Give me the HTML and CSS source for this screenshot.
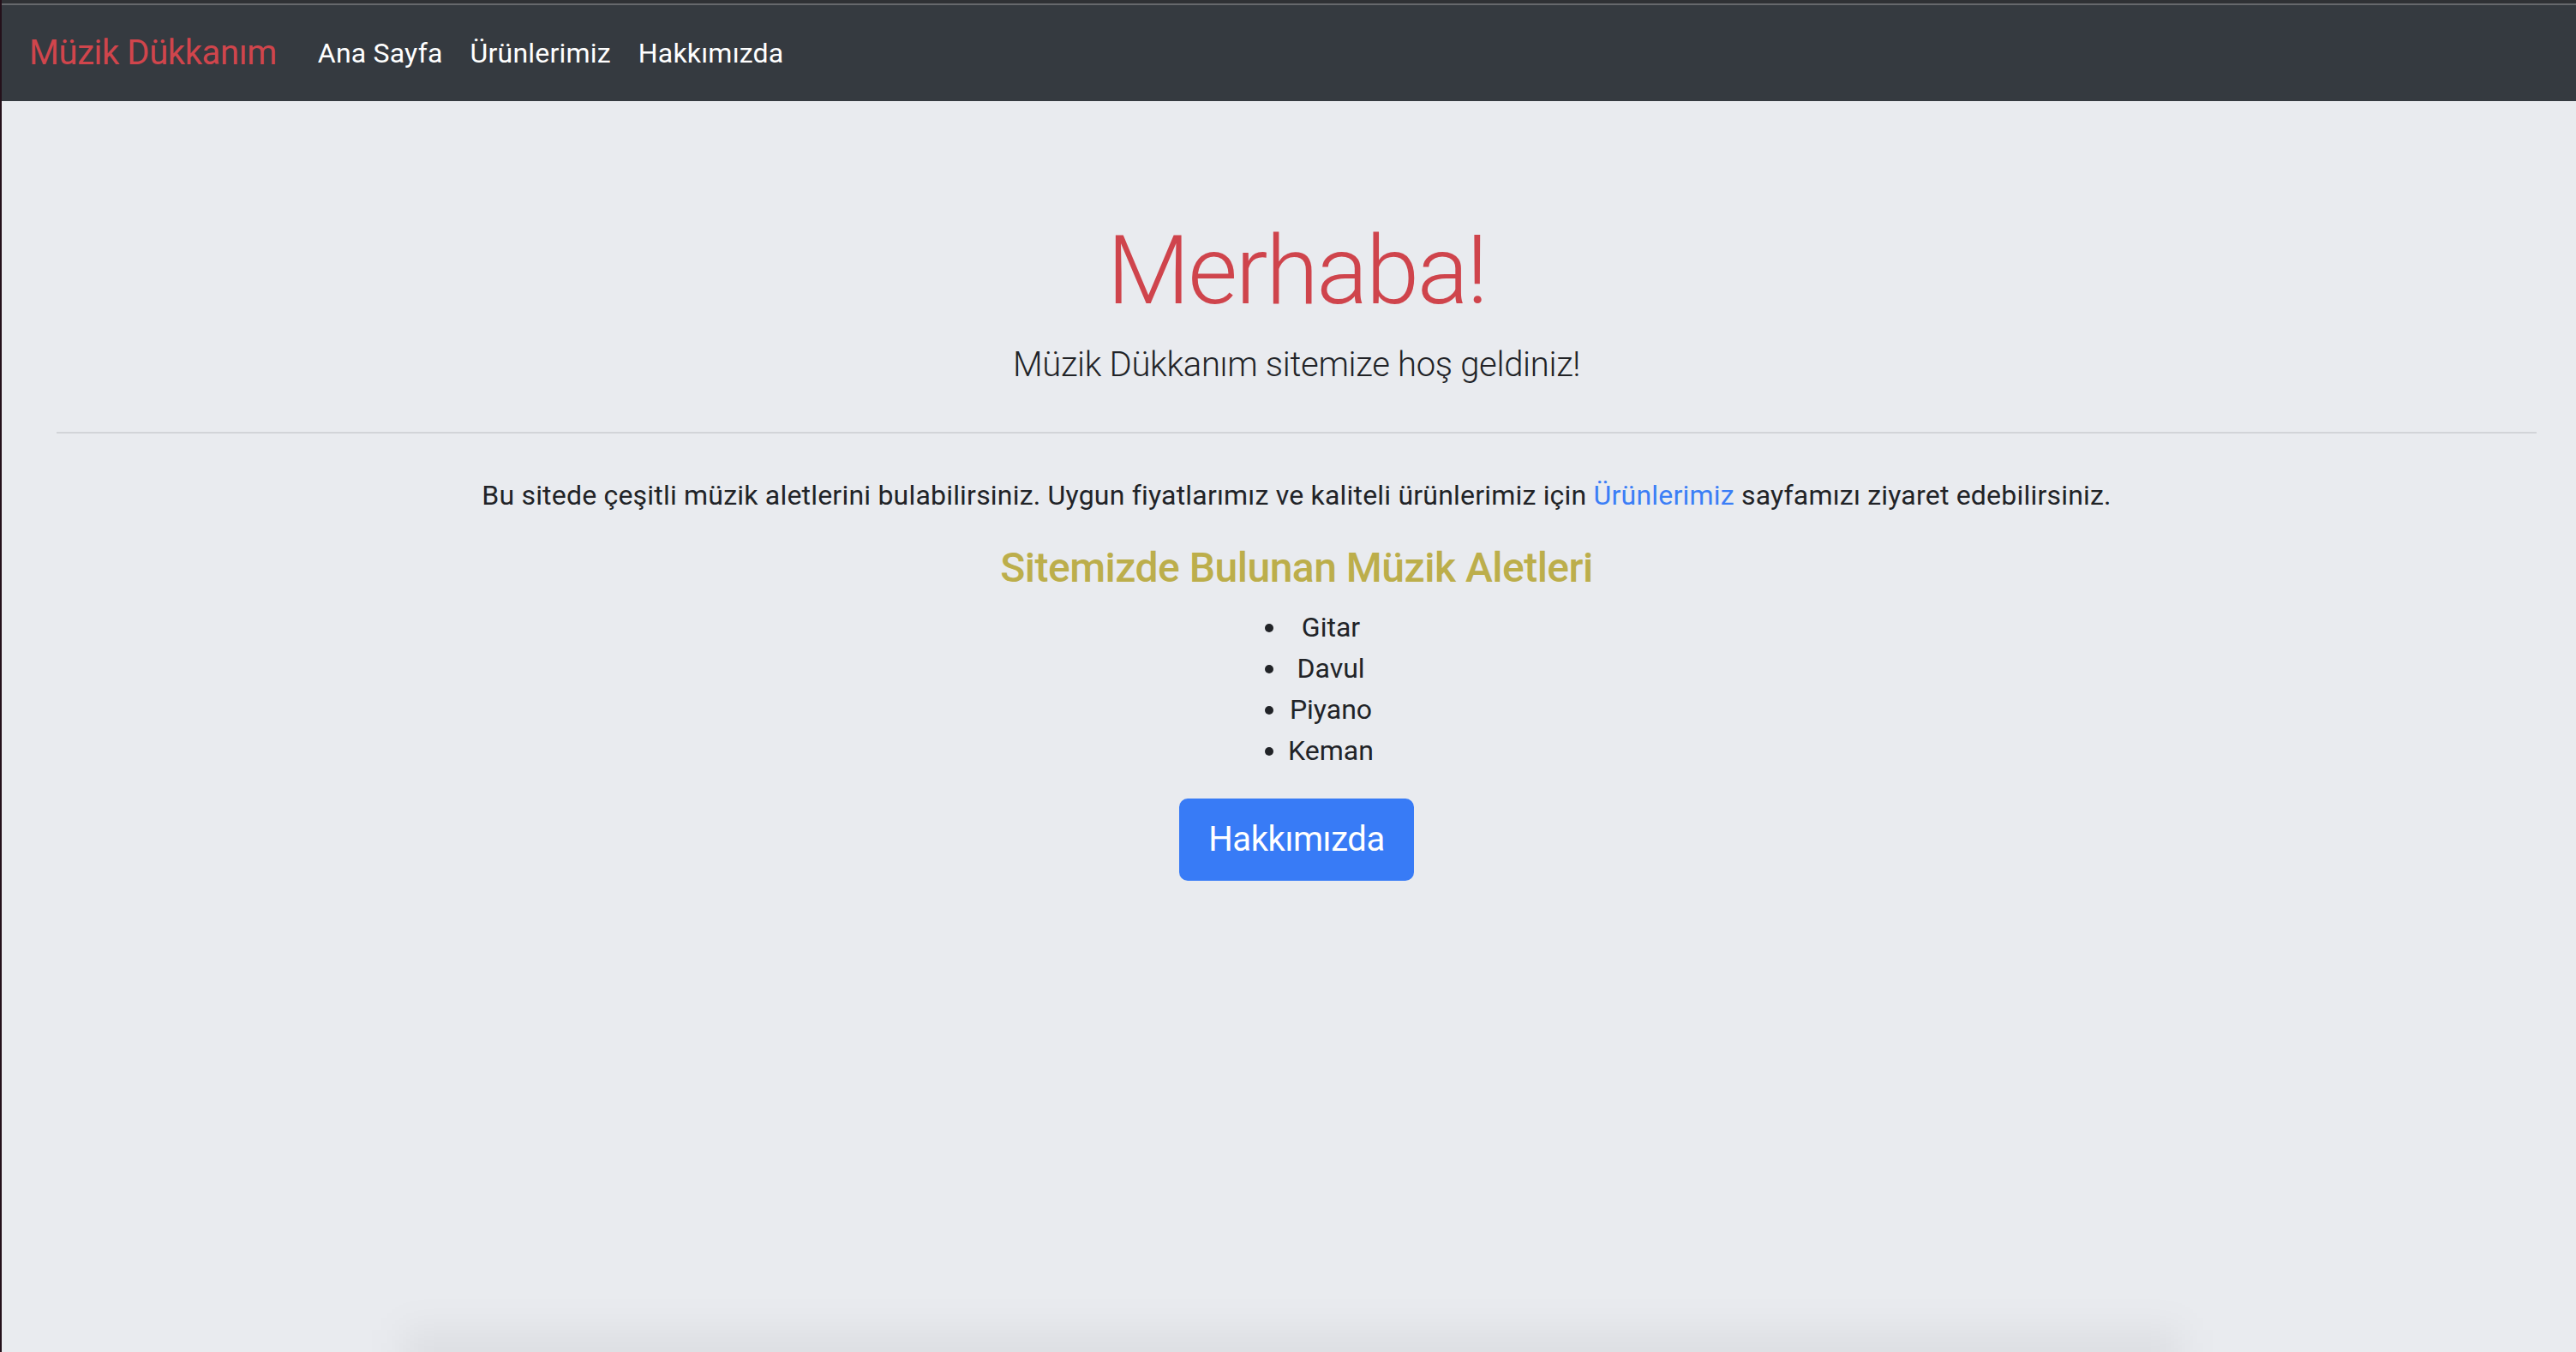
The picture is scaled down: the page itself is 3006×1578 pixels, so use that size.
FILE: index.html
```html
<!DOCTYPE html>
<html lang="tr">
<head>
<meta charset="utf-8">
<title>Müzik Dükkanım</title>
<link rel="stylesheet" href="styles.css">
</head>
<body>
<div class="frame">
  <div class="topstrip"></div>
  <nav class="navbar">
    <a class="brand" href="#">Müzik Dükkanım</a>
    <ul class="nav">
      <li><a class="nav-link" href="#">Ana Sayfa</a></li>
      <li><a class="nav-link" href="#">Ürünlerimiz</a></li>
      <li><a class="nav-link" href="#">Hakkımızda</a></li>
    </ul>
  </nav>
  <main class="jumbotron">
    <h1 class="title">Merhaba!</h1>
    <p class="lead">Müzik Dükkanım sitemize hoş geldiniz!</p>
    <hr class="divider">
    <p class="text">Bu sitede çeşitli müzik aletlerini bulabilirsiniz. Uygun fiyatlarımız ve kaliteli ürünlerimiz için <a class="link" href="#">Ürünlerimiz</a> sayfamızı ziyaret edebilirsiniz.</p>
    <h4 class="subtitle">Sitemizde Bulunan Müzik Aletleri</h4>
    <div class="list-wrap">
      <ul class="list">
        <li>Gitar</li>
        <li>Davul</li>
        <li>Piyano</li>
        <li>Keman</li>
      </ul>
    </div>
    <div class="btn-wrap">
      <a class="btn" href="#">Hakkımızda</a>
    </div>
  </main>
</div>
</body>
</html>
```

FILE: styles.css
```css
html, body {
  margin: 0;
  padding: 0;
  height: 100%;
}

body {
  background: #e9ebef;
  font-family: Roboto, "Liberation Sans", Arial, sans-serif;
  color: #212327;
  overflow: hidden;
}

.frame {
  min-height: 100%;
  border-left: 2px solid #24101a;
  box-sizing: border-box;
  position: relative;
}

.frame::after {
  content: "";
  position: fixed;
  left: 470px;
  right: 460px;
  bottom: -34px;
  height: 60px;
  background: rgba(0, 0, 0, 0.05);
  filter: blur(22px);
  pointer-events: none;
}

.topstrip {
  height: 4px;
  background: #2f3135;
  border-bottom: 2px solid #66686c;
}

.navbar {
  display: flex;
  align-items: center;
  background: #353a40;
  padding: 16px 32px;
  height: 112px;
  box-sizing: border-box;
}

.brand {
  font-size: 40px;
  line-height: 60px;
  padding: 10px 0;
  margin-right: 32px;
  color: #d0454c;
  text-decoration: none;
  letter-spacing: -0.4px;
}

.nav {
  display: flex;
  list-style: none;
  margin: 0;
  padding: 0;
}

.nav-link {
  display: block;
  font-size: 32px;
  line-height: 48px;
  padding: 16px 16px;
  color: #ffffff;
  text-decoration: none;
  letter-spacing: 0.2px;
}

.jumbotron {
  padding: 128px 46px 128px 64px;
  text-align: center;
}

.title {
  font-size: 112px;
  font-weight: 300;
  line-height: 1.2;
  margin: 3px 0 13px;
  color: #cf444c;
  letter-spacing: -2.4px;
}

.lead {
  font-size: 40px;
  font-weight: 300;
  line-height: 1.5;
  margin: 0 0 32px;
  letter-spacing: -0.3px;
}

.divider {
  margin: 48px 0;
  border: 0;
  border-top: 2px solid #d2d4d8;
}

.text {
  font-size: 32px;
  line-height: 48px;
  margin: 0 0 32px;
  letter-spacing: 0.2px;
}

.link {
  color: #3b7ef6;
  text-decoration: none;
}

.subtitle {
  font-size: 48px;
  font-weight: 500;
  line-height: 1.2;
  margin: 0 0 16px;
  color: #bcae4b;
  letter-spacing: -0.5px;
}

.list-wrap {
  display: flex;
  justify-content: center;
  margin-bottom: 32px;
}

.list {
  margin: 0;
  padding-left: 80px;
  font-size: 32px;
  line-height: 48px;
  text-align: center;
}

.btn-wrap {
  display: flex;
  justify-content: center;
}

.btn {
  display: inline-block;
  font-size: 40px;
  line-height: 60px;
  padding: 16px 32px;
  border: 2px solid #387bf6;
  border-radius: 10px;
  background: #387bf6;
  color: #ffffff;
  text-decoration: none;
  letter-spacing: -0.4px;
}
```
